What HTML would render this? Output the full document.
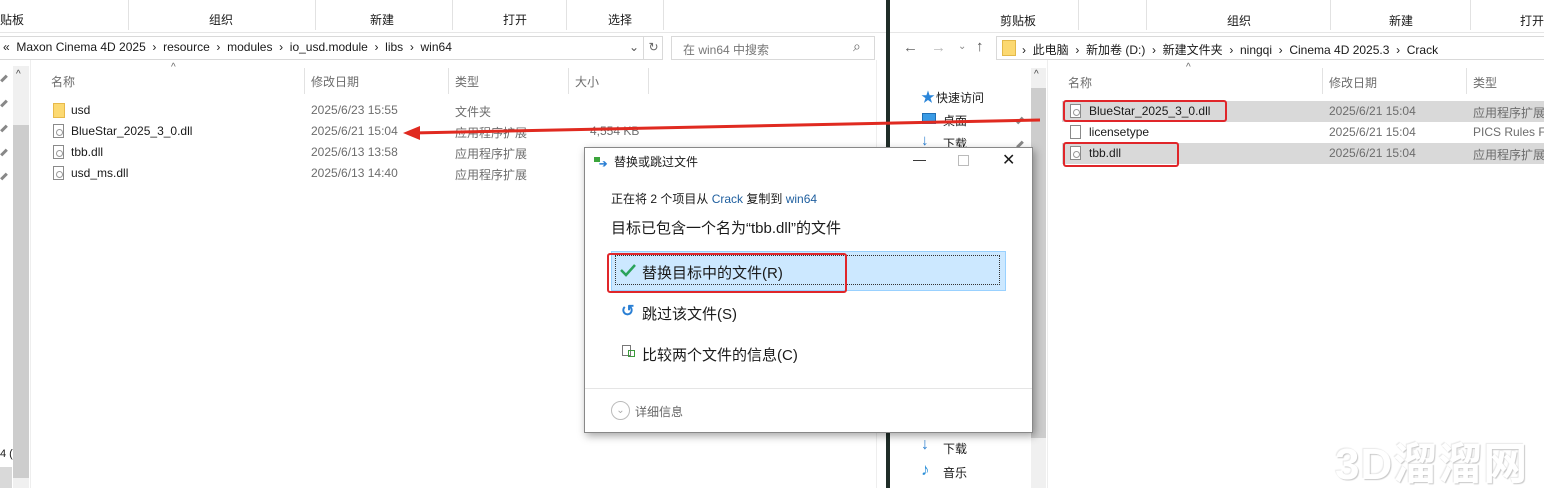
<!DOCTYPE html>
<html><head><meta charset="utf-8"><style>
*{margin:0;padding:0;box-sizing:border-box}
body{width:1544px;height:488px;overflow:hidden;background:#fff;position:relative;font-family:"Liberation Sans","Noto Sans CJK SC",sans-serif;font-size:12px;color:#1a1a1a}
.a{position:absolute;white-space:nowrap}
.g{color:#6d6d6d}
.sep{position:absolute;width:1px;background:#e2e2e2}
.fi{position:absolute;width:11px;height:14px;border:1px solid #8a8a8a;background:#fff}
.fi:after{content:"";position:absolute;left:2px;top:4px;width:5px;height:5px;border:1px solid #999;border-radius:50%}
.pin{position:absolute;width:8px;height:3px;background:#888;transform:rotate(-45deg)}
</style></head><body>
<!-- LEFT WINDOW -->
<div class="a" style="left:0;top:0;width:886px;height:33px;background:#fff;border-bottom:1px solid #e6e6e6"></div>
<div class="sep" style="left:128px;top:0;height:30px"></div>
<div class="sep" style="left:315px;top:0;height:30px"></div>
<div class="sep" style="left:452px;top:0;height:30px"></div>
<div class="sep" style="left:566px;top:0;height:30px"></div>
<div class="sep" style="left:663px;top:0;height:30px"></div>
<div class="a" style="left:0;top:11px">贴板</div>
<div class="a" style="left:209px;top:11px">组织</div>
<div class="a" style="left:370px;top:11px">新建</div>
<div class="a" style="left:503px;top:11px">打开</div>
<div class="a" style="left:608px;top:11px">选择</div>
<div class="a" style="left:0;top:36px;width:663px;height:24px;border:1px solid #d9d9d9;border-left:none"></div>
<div class="a" style="left:3px;top:40px;font-size:12px">«&nbsp; Maxon Cinema 4D 2025 &nbsp;›&nbsp; resource &nbsp;›&nbsp; modules &nbsp;›&nbsp; io_usd.module &nbsp;›&nbsp; libs &nbsp;›&nbsp; win64</div>
<div class="a" style="left:629px;top:40px;color:#555">⌄</div>
<div class="a" style="left:643px;top:37px;width:20px;height:22px;border-left:1px solid #d9d9d9;color:#666;text-align:center;padding-top:3px">↻</div>
<div class="a" style="left:671px;top:36px;width:204px;height:24px;border:1px solid #d9d9d9"></div>
<div class="a" style="left:683px;top:41px;color:#777">在 win64 中搜索</div>
<div class="a" style="left:853px;top:38px;color:#666;font-size:14px">⌕</div>
<div class="a" style="left:13px;top:66px;width:16px;height:422px;background:#f0f0f0"></div>
<div class="a" style="left:13px;top:125px;width:16px;height:353px;background:#cdcdcd"></div>
<div class="a" style="left:16px;top:69px;color:#444;font-size:10px">^</div>
<div class="sep" style="left:30px;top:60px;height:428px;background:#eee"></div>
<div class="pin" style="left:0;top:77px"></div><div class="pin" style="left:0;top:102px"></div><div class="pin" style="left:0;top:127px"></div><div class="pin" style="left:0;top:151px"></div><div class="pin" style="left:0;top:175px"></div>
<div class="a" style="left:0;top:448px;font-size:11px">4 (</div>
<div class="a" style="left:0;top:467px;width:12px;height:21px;background:#d9d9d9"></div>
<div class="a" style="left:171px;top:62px;font-size:10px;color:#666">^</div>
<div class="a g" style="left:51px;top:73px">名称</div>
<div class="sep" style="left:304px;top:68px;height:26px"></div>
<div class="a g" style="left:311px;top:73px">修改日期</div>
<div class="sep" style="left:448px;top:68px;height:26px"></div>
<div class="a g" style="left:455px;top:73px">类型</div>
<div class="sep" style="left:568px;top:68px;height:26px"></div>
<div class="a g" style="left:575px;top:73px">大小</div>
<div class="sep" style="left:648px;top:68px;height:26px"></div>
<div class="a" style="left:53px;top:103px;width:12px;height:15px;background:#fcd971;border:1px solid #e7b94a"></div>
<div class="a" style="left:71px;top:103px">usd</div>
<div class="a g" style="left:311px;top:103px">2025/6/23 15:55</div><div class="a g" style="left:455px;top:103px">文件夹</div>
<div class="fi" style="left:53px;top:124px"></div><div class="a" style="left:71px;top:124px">BlueStar_2025_3_0.dll</div>
<div class="a g" style="left:311px;top:124px">2025/6/21 15:04</div><div class="a g" style="left:455px;top:124px">应用程序扩展</div><div class="a g" style="left:590px;top:124px">4,554 KB</div>
<div class="fi" style="left:53px;top:145px"></div><div class="a" style="left:71px;top:145px">tbb.dll</div>
<div class="a g" style="left:311px;top:145px">2025/6/13 13:58</div><div class="a g" style="left:455px;top:145px">应用程序扩展</div>
<div class="fi" style="left:53px;top:166px"></div><div class="a" style="left:71px;top:166px">usd_ms.dll</div>
<div class="a g" style="left:311px;top:166px">2025/6/13 14:40</div><div class="a g" style="left:455px;top:166px">应用程序扩展</div>
<div class="sep" style="left:876px;top:60px;height:428px;background:#eee"></div>
<!-- divider -->
<div class="a" style="left:886px;top:0;width:4px;height:488px;background:#1f2d28"></div>
<!-- RIGHT WINDOW -->
<div class="a" style="left:890px;top:0;width:654px;height:33px;border-bottom:1px solid #e6e6e6"></div>
<div class="sep" style="left:1078px;top:0;height:30px"></div>
<div class="sep" style="left:1146px;top:0;height:30px"></div>
<div class="sep" style="left:1330px;top:0;height:30px"></div>
<div class="sep" style="left:1470px;top:0;height:30px"></div>
<div class="a" style="left:1000px;top:12px">剪贴板</div>
<div class="a" style="left:1227px;top:12px">组织</div>
<div class="a" style="left:1389px;top:12px">新建</div>
<div class="a" style="left:1520px;top:12px">打开</div>
<div class="a" style="left:903px;top:39px;color:#666;font-size:15px">←</div>
<div class="a" style="left:931px;top:39px;color:#bbb;font-size:15px">→</div>
<div class="a" style="left:958px;top:41px;color:#888;font-size:10px">⌄</div>
<div class="a" style="left:976px;top:38px;color:#555;font-size:15px">↑</div>
<div class="a" style="left:996px;top:36px;width:548px;height:24px;border:1px solid #d9d9d9;border-right:none"></div>
<div class="a" style="left:1002px;top:40px;width:14px;height:16px;background:#fcd971;border:1px solid #e3b94a"></div>
<div class="a" style="left:1022px;top:41px">›&nbsp; 此电脑 &nbsp;›&nbsp; 新加卷 (D:) &nbsp;›&nbsp; 新建文件夹 &nbsp;›&nbsp; ningqi &nbsp;›&nbsp; Cinema 4D 2025.3 &nbsp;›&nbsp; Crack</div>
<div class="a" style="left:921px;top:87px;color:#2b86d9;font-size:14px">★</div><div class="a" style="left:936px;top:89px">快速访问</div>
<div class="a" style="left:922px;top:113px;width:14px;height:11px;background:#3a9be5;border:1px solid #1f6fb5"></div><div class="a" style="left:943px;top:112px">桌面</div>
<div class="a" style="left:921px;top:132px;color:#2b7fd0;font-weight:bold;font-size:15px">↓</div><div class="a" style="left:943px;top:135px">下载</div>
<div class="pin" style="left:1016px;top:119px"></div><div class="pin" style="left:1016px;top:143px"></div>
<div class="a" style="left:921px;top:436px;color:#2b7fd0;font-weight:bold;font-size:16px">↓</div><div class="a" style="left:943px;top:440px">下载</div>
<div class="a" style="left:921px;top:460px;color:#2b8fd8;font-size:17px">♪</div><div class="a" style="left:943px;top:464px">音乐</div>
<div class="a" style="left:1031px;top:68px;width:15px;height:420px;background:#f0f0f0"></div>
<div class="a" style="left:1031px;top:88px;width:15px;height:350px;background:#cdcdcd"></div>
<div class="a" style="left:1034px;top:69px;font-size:10px;color:#444">^</div>
<div class="sep" style="left:1047px;top:60px;height:428px;background:#eee"></div>
<div class="a" style="left:1186px;top:62px;font-size:10px;color:#666">^</div>
<div class="a g" style="left:1068px;top:74px">名称</div>
<div class="sep" style="left:1322px;top:68px;height:26px"></div>
<div class="a g" style="left:1329px;top:74px">修改日期</div>
<div class="sep" style="left:1466px;top:68px;height:26px"></div>
<div class="a g" style="left:1473px;top:74px">类型</div>
<div class="a" style="left:1062px;top:101px;width:482px;height:21px;background:#d9d9d9"></div>
<div class="a" style="left:1062px;top:143px;width:482px;height:21px;background:#d9d9d9"></div>
<div class="fi" style="left:1070px;top:104px"></div><div class="a" style="left:1089px;top:104px">BlueStar_2025_3_0.dll</div>
<div class="a g" style="left:1329px;top:104px">2025/6/21 15:04</div><div class="a g" style="left:1473px;top:104px">应用程序扩展</div>
<div class="a" style="left:1070px;top:125px;width:11px;height:14px;border:1px solid #8a8a8a"></div><div class="a" style="left:1089px;top:125px">licensetype</div>
<div class="a g" style="left:1329px;top:125px">2025/6/21 15:04</div><div class="a g" style="left:1473px;top:125px">PICS Rules F</div>
<div class="fi" style="left:1070px;top:146px"></div><div class="a" style="left:1089px;top:146px">tbb.dll</div>
<div class="a g" style="left:1329px;top:146px">2025/6/21 15:04</div><div class="a g" style="left:1473px;top:146px">应用程序扩展</div>
<div class="a" style="left:1063px;top:100px;width:164px;height:22px;border:2px solid #e0262a;border-radius:3px"></div>
<div class="a" style="left:1063px;top:142px;width:116px;height:25px;border:2px solid #e0262a;border-radius:3px"></div>
<div class="a" style="left:1335px;top:428px;font-size:44px;font-weight:bold;color:#fff;text-shadow:1px 1px 1px #c8c8c8,-1px -1px 1px #e8e8e8;letter-spacing:1px">3D溜溜网</div>
<!-- arrow -->
<svg class="a" style="left:0;top:0" width="1544" height="488"><line x1="1040" y1="120" x2="412" y2="133" stroke="#e02a20" stroke-width="3"/><polygon points="403,133 420,126 420,140" fill="#e02a20"/></svg>
<!-- DIALOG -->
<div class="a" style="left:584px;top:147px;width:449px;height:286px;background:#fff;border:1px solid #888;box-shadow:2px 3px 8px rgba(0,0,0,.35)"></div>
<div class="a" style="left:594px;top:157px;width:6px;height:5px;background:#3ca53c"></div>
<div class="a" style="left:599px;top:159px;color:#2a7fd4;font-size:10px;font-weight:bold">➔</div>
<div class="a" style="left:614px;top:153px">替换或跳过文件</div>
<div class="a" style="left:913px;top:152px;font-size:13px">—</div>
<div class="a" style="left:958px;top:155px;width:11px;height:11px;border:1px solid #bbb"></div>
<div class="a" style="left:1002px;top:150px;font-size:16px">✕</div>
<div class="a" style="left:611px;top:190px">正在将 2 个项目从 <span style="color:#1f5f9f">Crack</span> 复制到 <span style="color:#1f5f9f">win64</span></div>
<div class="a" style="left:611px;top:217px;font-size:15px">目标已包含一个名为“tbb.dll”的文件</div>
<div class="a" style="left:611px;top:251px;width:395px;height:40px;background:#cce8ff;border:1px solid #99d1ff"></div>
<div class="a" style="left:615px;top:255px;width:385px;height:30px;border:1px dotted #333"></div>
<svg class="a" style="left:620px;top:263px" width="16" height="14"><path d="M1 7 L6 12 L15 2" stroke="#2aa35a" stroke-width="2.5" fill="none"/></svg>
<div class="a" style="left:642px;top:262px;font-size:15px">替换目标中的文件(R)</div>
<div class="a" style="left:607px;top:253px;width:240px;height:40px;border:2px solid #e0262a;border-radius:3px"></div>
<div class="a" style="left:621px;top:301px;color:#2a7fd4;font-size:16px;font-weight:bold">↺</div>
<div class="a" style="left:642px;top:303px;font-size:15px">跳过该文件(S)</div>
<div class="a" style="left:622px;top:345px;width:9px;height:11px;border:1px solid #777"></div>
<div class="a" style="left:628px;top:350px;width:7px;height:7px;border:1px solid #3a9a3a"></div>
<div class="a" style="left:642px;top:344px;font-size:15px">比较两个文件的信息(C)</div>
<div class="a" style="left:585px;top:388px;width:447px;height:1px;background:#e5e5e5"></div>
<div class="a" style="left:611px;top:401px;width:19px;height:19px;border:1px solid #bbb;border-radius:50%;color:#aaa;font-size:10px;text-align:center;line-height:17px">⌄</div>
<div class="a" style="left:635px;top:403px;color:#666">详细信息</div>
</body></html>
